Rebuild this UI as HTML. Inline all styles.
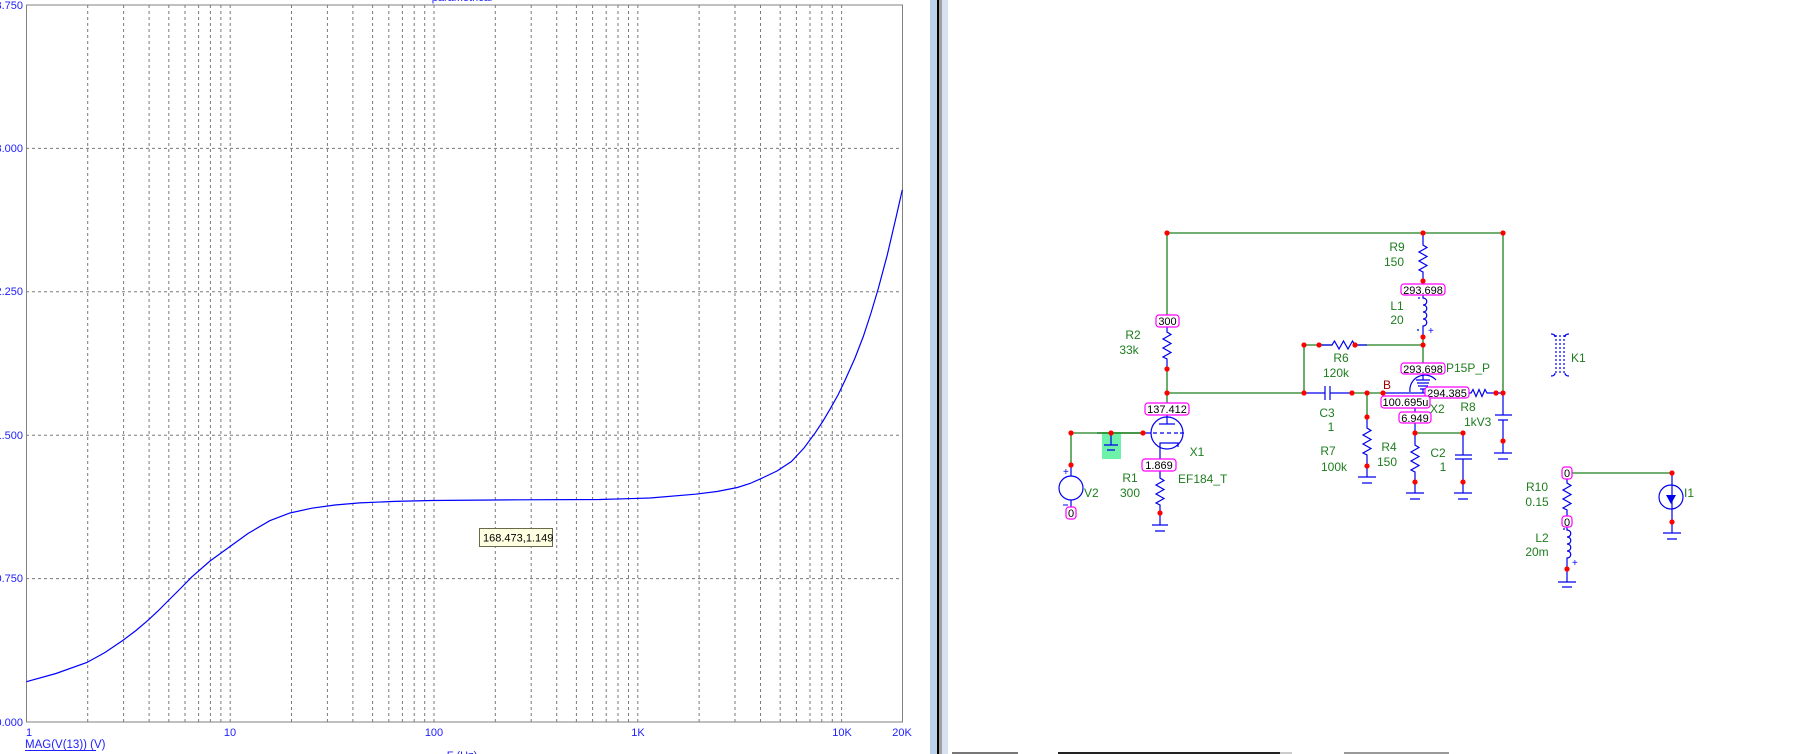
<!DOCTYPE html>
<html><head><meta charset="utf-8"><style>
html,body{margin:0;padding:0;background:#fff;width:1798px;height:754px;overflow:hidden}
svg{position:absolute;left:0;top:0}
text{font-family:"Liberation Sans",Arial,sans-serif;font-size:11px}
.ax{fill:#2020ff;font-size:11.5px}
.g{fill:#1e7d1e}
.g text{font-size:12px}
.w{stroke:#1f7f1f;stroke-width:1.3;fill:none}
.c{stroke:#0000ee;stroke-width:1.2;fill:none}
.n{fill:#ff0000}
.bx{fill:#fff;stroke:#ff00ff;stroke-width:1.2}
.bt{fill:#000;text-anchor:middle}
.grid{stroke:#7a7a7a;stroke-width:1;stroke-dasharray:3 3;fill:none}
</style></head><body>
<svg width="1798" height="754" viewBox="0 0 1798 754">
<g class="grid">
<path d="M26 148.4H903M26 291.8H903M26 435.2H903M26 578.6H903"/>
<path d="M87.7 5V722M123.6 5V722M149.1 5V722M168.8 5V722M185 5V722M198.6 5V722M210.4 5V722M220.9 5V722M230.2 5V722
M291.5 5V722M327.4 5V722M352.9 5V722M372.6 5V722M388.8 5V722M402.4 5V722M414.2 5V722M424.7 5V722M434 5V722
M495.3 5V722M531.2 5V722M556.7 5V722M576.4 5V722M592.6 5V722M606.2 5V722M618 5V722M628.5 5V722M637.8 5V722
M699.1 5V722M735 5V722M760.5 5V722M780.2 5V722M796.4 5V722M810 5V722M821.8 5V722M832.3 5V722M841.6 5V722"/>
</g>
<rect x="26.5" y="5" width="876" height="717" fill="none" stroke="#808080" stroke-width="1"/>
<path d="M26.4 681.7L56 673.5L86.9 662.5L105 652.5L122.9 640.4L136 630.5L148.1 620.2L158 611L167.9 601L180 589L191.8 576.9L210 561L227.8 548.1L248 533.5L269.8 520.7L290 513L311.8 508.2L335 505L359.7 502.9L395 501.4L431.7 500.5L520 499.8L599.5 499.5L650 498L695.4 494.2L717 491.5L737.4 487.5L750 483.5L761.4 478.4L777 471L791.4 461.5L804 448L815.3 432.7L823 421L830.3 408.7L838 395L845.3 379.8L855 358L863.3 336.5L871 313L878.3 288.5L887.3 254.8L896.3 216.3L902.3 189.9" fill="none" stroke="#0000ff" stroke-width="1.2"/>
<g class="ax" text-anchor="end">
<text x="23" y="9">3.750</text><text x="23" y="152">3.000</text><text x="23" y="295">2.250</text>
<text x="23" y="439">1.500</text><text x="23" y="582">0.750</text><text x="23" y="726">0.000</text>
</g>
<g class="ax" text-anchor="middle">
<text x="29" y="736">1</text><text x="230" y="736">10</text><text x="434" y="736">100</text>
<text x="638" y="736">1K</text><text x="842" y="736">10K</text><text x="902" y="736">20K</text>
<text x="462" y="1">parametrical</text><text x="462" y="759">F (Hz)</text>
</g>
<text class="ax" x="25" y="748">MAG(V(13)) (V)</text>
<path d="M25 750.5H96" stroke="#2020ff" stroke-width="1"/>
<rect x="479.5" y="528.5" width="73" height="18" fill="#ffffe1" stroke="#6a6a4a"/>
<text x="483" y="541.5" fill="#000">168.473,1.149</text>
<rect x="930" y="0" width="7" height="754" fill="#b9d1ea"/>
<rect x="937" y="0" width="2" height="754" fill="#000"/>
<rect x="939" y="0" width="3" height="754" fill="#a0a0a0"/>
<rect x="942" y="0" width="6" height="754" fill="#d6e2ef"/>
<rect x="952" y="752" width="66" height="2" fill="#777"/>
<rect x="1058" y="752" width="222" height="2" fill="#222"/>
<rect x="1280" y="752" width="12" height="2" fill="#ccc"/>
<rect x="1344" y="752" width="105" height="2" fill="#999"/>

<g class="w">
<path d="M1167 233H1503V393"/>
<path d="M1167 233V315"/>
<path d="M1167 369V403"/>
<path d="M1167 393H1304"/>
<path d="M1304 345V393"/>
<path d="M1304 345H1332M1355 345H1423"/>
<path d="M1423 337V363"/>
<path d="M1071 433H1143"/>
<path d="M1071 433V465"/>
<path d="M1352 393H1383"/>
<path d="M1367 393V417"/>
<path d="M1415 433H1463"/>
<path d="M1572 473H1672"/>
</g>
<g class="c">
<path d="M1167 327V332l4 2.5-8 4.5 8 4.5-8 4.5 8 4.5-8 4.5 4 2V369"/>
<path d="M1423 233V245l4 2.5-8 4.5 8 4.5-8 4.5 8 4.5-8 4.5 4 2V284"/>
<path d="M1423 295V298c5 0 5 7 0 7c5 0 5 7 0 7c5 0 5 7 0 7c5 0 5 7 0 7V337"/>
<path d="M1419 297v2M1419 330h-2"/>
<path d="M1319 345H1332l2.5-4 4.5 8 4.5-8 4.5 8 4.5-8 2.5 4H1367"/>
<path d="M1304 393H1325M1325 386V400M1330 386V400M1330 393H1352"/>
<path d="M1367 417V428l4 2.5-8 4.5 8 4.5-8 4.5 8 4.5-8 4.5 4 2V477M1358 477H1376M1362 483H1372"/>
<circle cx="1167" cy="433" r="16"/>
<path d="M1143 433H1151M1153 433h4M1160 433h4M1167 433h4M1174 433h4M1180 433h4" />
<path d="M1167 415V424M1159 424H1175"/>
<path d="M1160 459V443H1178V447"/>
<path d="M1160 471V478l4 2.5-8 4.5 8 4.5-8 4.5 8 4.5-8 4.5 4 2V525M1152 525H1168M1155 531H1165"/>
<path d="M1071 465V476M1071 500V507"/>
<circle cx="1071" cy="488" r="12"/>
<path d="M1423 374V380M1416 380H1430M1417 383h12M1418 386h10M1420 389h6M1423 389V393"/>
<path d="M1410 392 A15 15 0 0 1 1436 380"/>
<path d="M1383 393H1425"/>
<path d="M1415 408V412M1415 423V433"/>
<path d="M1469 393H1471l2-3.5 3 7 3-7 3 7 3-7 2 3.5H1503"/>
<path d="M1503 393V415M1495 415H1512M1498 420H1508M1503 420V453M1494 453H1512M1498 459H1508"/>
<path d="M1415 433V445l4 2.5-8 4.5 8 4.5-8 4.5 8 4.5-8 4.5 4 2V493M1406 493H1424M1410 499H1420"/>
<path d="M1463 433V455M1455 455H1472M1455 459H1472M1463 459V493M1454 493H1472M1458 499H1468"/>
<path d="M1556 335v38M1560 335v38M1564 335v38" stroke-dasharray="2 2"/>
<path d="M1551 334q4 0 4 3M1551 376q4 0 4-3M1569 334q-4 0-4 3M1569 376q-4 0-4-3"/>
<path d="M1567 479V483l4 2.5-8 4.5 8 4.5-8 4.5 8 4.5-8 4.5 4 2V516"/>
<path d="M1567 527V530c5 0 5 7 0 7c5 0 5 7 0 7c5 0 5 7 0 7c5 0 5 7 0 7V582M1558 582H1576M1562 587H1572M1563 529h2"/>
<circle cx="1671" cy="497" r="12"/>
<path d="M1672 473V533M1663 533H1681M1667 539H1677"/>
</g>
<path d="M1666 495H1676L1671 504Z" fill="#0000ee"/>
<rect x="1102" y="432" width="19" height="27" fill="#55ee99" opacity="0.85"/>
<path d="M1111 433V445M1104 445H1118M1107 450H1115" stroke="#0000ee" stroke-width="1.2"/>
<path d="M1097 433H1143" stroke="#1f7f1f" stroke-width="1.6"/>

<g class="n">
<circle cx="1167" cy="233" r="2.6"/><circle cx="1423" cy="233" r="2.6"/><circle cx="1503" cy="233" r="2.6"/>
<circle cx="1167" cy="369" r="2.6"/><circle cx="1167" cy="393" r="2.6"/>
<circle cx="1304" cy="345" r="2.6"/><circle cx="1319" cy="345" r="2.6"/><circle cx="1355" cy="345" r="2.6"/><circle cx="1423" cy="345" r="2.6"/>
<circle cx="1423" cy="281" r="2.6"/><circle cx="1423" cy="337" r="2.6"/>
<circle cx="1304" cy="393" r="2.6"/><circle cx="1352" cy="393" r="2.6"/><circle cx="1367" cy="393" r="2.6"/><circle cx="1383" cy="393" r="2.6"/>
<circle cx="1496" cy="393" r="2.6"/><circle cx="1503" cy="393" r="2.6"/>
<circle cx="1071" cy="433" r="2.6"/><circle cx="1111" cy="433" r="2.6"/><circle cx="1143" cy="433" r="2.6"/>
<circle cx="1071" cy="465" r="2.6"/><circle cx="1160" cy="513" r="2.6"/>
<circle cx="1367" cy="417" r="2.6"/><circle cx="1367" cy="466" r="2.6"/>
<circle cx="1415" cy="433" r="2.6"/><circle cx="1463" cy="433" r="2.6"/>
<circle cx="1415" cy="482" r="2.6"/><circle cx="1463" cy="482" r="2.6"/><circle cx="1503" cy="441" r="2.6"/>
<circle cx="1672" cy="473" r="2.6"/><circle cx="1672" cy="522" r="2.6"/><circle cx="1567" cy="569" r="2.6"/>
</g>

<g>
<rect class="bx" x="1156" y="315" width="23" height="12" rx="3"/><text class="bt" x="1167.5" y="325">300</text>
<rect class="bx" x="1145" y="403" width="44" height="12" rx="3"/><text class="bt" x="1167" y="413">137.412</text>
<rect class="bx" x="1142" y="459" width="34" height="12" rx="3"/><text class="bt" x="1159" y="469">1.869</text>
<rect class="bx" x="1066" y="507" width="10" height="12" rx="3"/><text class="bt" x="1071" y="517">0</text>
<rect class="bx" x="1401" y="284" width="44" height="11" rx="3"/><text class="bt" x="1423" y="294">293.698</text>
<rect class="bx" x="1401" y="363" width="44" height="11" rx="3"/><text class="bt" x="1423" y="373">293.698</text>
<rect class="bx" x="1425" y="387" width="44" height="11" rx="3"/><text class="bt" x="1447" y="397">294.385</text>
<rect class="bx" x="1381" y="396" width="49" height="12" rx="3"/><text class="bt" x="1405.5" y="406">100.695u</text>
<rect class="bx" x="1399" y="412" width="32" height="11" rx="3"/><text class="bt" x="1415" y="422">6.949</text>
<rect class="bx" x="1562" y="467" width="10" height="12" rx="3"/><text class="bt" x="1567" y="477">0</text>
<rect class="bx" x="1562" y="516" width="10" height="11" rx="3"/><text class="bt" x="1567" y="526">0</text>
</g>

<g class="g" text-anchor="middle">
<text x="1133" y="339">R2</text><text x="1129" y="354">33k</text>
<text x="1341" y="362">R6</text><text x="1336" y="377">120k</text>
<text x="1327" y="417">C3</text><text x="1331" y="431">1</text>
<text x="1328" y="455">R7</text><text x="1334" y="471">100k</text>
<text x="1397" y="251">R9</text><text x="1394" y="266">150</text>
<text x="1397" y="310">L1</text><text x="1397" y="324">20</text>
<text x="1389" y="451">R4</text><text x="1387" y="466">150</text>
<text x="1438" y="457">C2</text><text x="1443" y="471">1</text>
<text x="1468" y="411">R8</text>
<text x="1130" y="482">R1</text><text x="1130" y="497">300</text>
<text x="1197" y="456">X1</text>
<text x="1537" y="491">R10</text><text x="1537" y="506">0.15</text>
<text x="1542" y="542">L2</text><text x="1537" y="556">20m</text>
</g>
<g class="g">
<text x="1178" y="483">EF184_T</text>
<text x="1084" y="497">V2</text>
<text x="1446" y="372">P15P_P</text>
<text x="1430" y="413">X2</text>
<text x="1464" y="426">1kV3</text>
<text x="1571" y="362">K1</text>
<text x="1684" y="497">I1</text>
</g>
<text x="1383" y="389" fill="#a00000" style="font-size:12px">B</text>
<g fill="#0000ee">
<text x="1063" y="475" style="font-size:10px">+</text>
<text x="1428" y="334" style="font-size:10px">+</text>
<text x="1572" y="566" style="font-size:10px">+</text>
</g>
<path d="M1063 505h5" stroke="#0000ee"/>
</svg>
</body></html>
